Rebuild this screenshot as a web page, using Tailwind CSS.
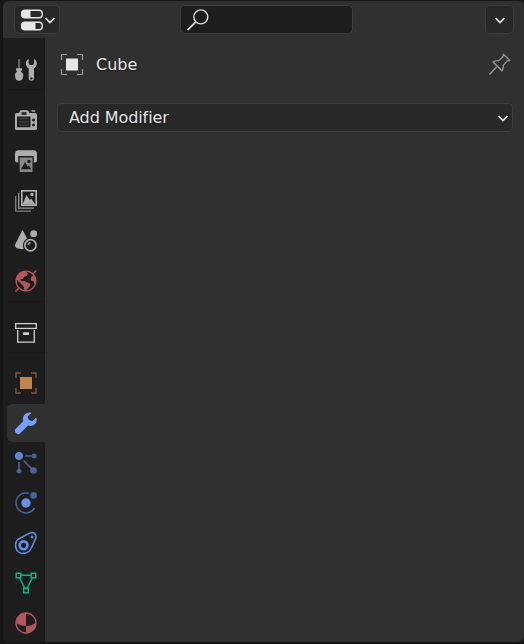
<!DOCTYPE html>
<html lang="en">
<head>
<meta charset="utf-8">
<title>Properties</title>
<script src="https://cdn.jsdelivr.net/npm/@tailwindcss/browser@4"></script>
</head>
<body class="h-screen overflow-hidden bg-[#161616] pl-[3px] pt-px pb-[2px] font-['DejaVu_Sans',sans-serif] text-base text-[#e6e6e6]">
<div class="flex h-full flex-col overflow-hidden rounded-[6px] bg-[#303030]">
  <header class="flex h-[37px] shrink-0 pl-[11px] pr-[10px] pt-1">
    <button class="flex h-[29px] w-[46px] items-center rounded-[5px] border border-[#3d3d3d] bg-[#282828] pl-[5px]">
      <svg class="h-6 w-6 shrink-0" viewBox="0 0 24 24" fill="none">
        <rect x="1.75" y="2.25" width="20.5" height="7.5" rx="3.2" stroke="#e6e6e6" stroke-width="1.4"/>
        <path d="M10.5 2H5a4 4 0 0 0 0 8h5.500z" fill="#e6e6e6"/>
        <rect x="1.75" y="14.250" width="20.5" height="7.5" rx="3.2" stroke="#e6e6e6" stroke-width="1.4"/>
        <path d="M15.500 14H5a4 4 0 0 0 0 8h10.500z" fill="#e6e6e6"/>
      </svg>
      <svg class="h-3 w-3 shrink-0" viewBox="0 0 12 12" fill="none"><path d="M1.500 4L6 8.500 10.500 4" stroke="#e6e6e6" stroke-width="1.7"/></svg>
    </button>
    <div class="ml-[120px] flex h-[29px] w-[173px] items-center rounded-[5px] border border-[#3d3d3d] bg-[#1d1d1d] pl-[5px]">
      <svg class="h-6 w-6" viewBox="0 0 24 24" fill="none" stroke="#d8d8d8" stroke-width="1.4"><circle cx="14.800" cy="8.900" r="7"/><path d="M9.800 13.900L1.500 22.200" stroke-width="1.800"/></svg>
    </div>
    <button class="ml-auto flex h-[29px] w-[29px] items-center justify-center rounded-[5px] border border-[#3d3d3d] bg-[#282828]">
      <svg class="mt-px h-3 w-3" viewBox="0 0 12 12" fill="none"><path d="M1.500 4L6 8.500 10.500 4" stroke="#e6e6e6" stroke-width="1.7"/></svg>
    </button>
  </header>
  <div class="flex min-h-0 flex-1">
    <nav class="flex w-[42px] shrink-0 flex-col bg-[#1d1d1d] pl-1 pt-3">
      <div class="flex h-10 shrink-0 items-center border-b border-[#191919] pl-[7px]">
        <svg class="h-6 w-6" viewBox="0 0 24 24" fill="#adadad">
          <path d="M4.500 1h1v9.500h-1zM2 10.200h6v1.300c0 1-1 1.300-1 2.200 1.500.7 2.300 2.200 2.300 4 0 3-1.800 5-4.300 5S1 20.700 1 17.700c0-1.800.8-3.300 2-4-.1-.9-1-1.200-1-2.200z"/>
          <path fill-rule="evenodd" d="M14.700 1v4.200c0 2.500 5.300 2.500 5.300 0V1c1.800.8 2.800 2.500 2.800 4.500 0 2.300-1.300 4-2.800 4.800v9.700a2.650 2.700 0 0 1-5.300 0v-9.700c-1.500-.8-2.800-2.500-2.800-4.800 0-2 1-3.700 2.800-4.500zM17.300 19.200a1.200 1.200 0 1 0 .1 0z"/>
        </svg>
      </div>
      <div class="mt-2.5 flex h-[202px] shrink-0 flex-col border-b border-[#191919] pl-[7px]">
        <div class="flex h-10 items-center">
          <svg class="h-6 w-6" viewBox="0 0 24 24" fill="#adadad">
            <path d="M17.500 2.200h3.700v1.600h-3.700z"/>
            <path fill-rule="evenodd" d="M2.500 5H5l1-2q.4-.8 1.200-.8h6q.8 0 1.200.8l1 2h6q1.600 0 1.600 1.600V20.500q0 1.500-1.600 1.500H2.500Q1 22 1 20.500V6.600Q1 5 2.500 5zM7.500 4.200v2.500h5V4.200zM3 8.500v10.800h13.500V8.500zM19.500 10.500a1.500 1.500 0 1 0 .1 0zM19.500 15.500a1.500 1.500 0 1 0 .1 0z"/>
            <path d="M5 10.200h9.500v1H5zM5 13.400h9.500v1H5zM5 16.600h9.500v1H5z" fill="#505050"/>
          </svg>
        </div>
        <div class="mt-px flex h-10 items-center">
          <svg class="h-6 w-6" viewBox="0 0 24 24">
            <path d="M4.500 1.200h15Q23 1.200 23 4.700V11q0 2.500-2.500 2.500h-.7V7H4.200v6.500h-.7Q1 13.500 1 11V4.700q0-3.500 3.500-3.500z" fill="#adadad"/>
            <path d="M5.700 8.500h12.800V23H5.700z" fill="#888888"/>
            <path d="M7 20.300l4-7.300 2.600 4.500 1.200-1.300 2.400 4.100z" fill="#1d1d1d"/><circle cx="15" cy="12.500" r="1.700" fill="#1d1d1d"/>
          </svg>
        </div>
        <div class="flex h-10 items-center">
          <svg class="h-6 w-6" viewBox="0 0 24 24" fill="none">
            <path d="M1.700 7v15.200H17" stroke="#808080" stroke-width="1.3"/><path d="M4.700 4v15.200H20" stroke="#999999" stroke-width="1.3"/>
            <rect x="7.800" y="1.800" width="14.400" height="14.400" stroke="#bdbdbd" stroke-width="1.500"/>
            <path d="M8.500 15.500l4-9.500 3.300 5 1.500-1.200 4 5.700z" fill="#adadad"/><circle cx="18" cy="5.500" r="1.800" fill="#adadad"/>
          </svg>
        </div>
        <div class="flex h-10 items-center">
          <svg class="h-6 w-6" viewBox="0 0 24 24" fill="#adadad">
            <path d="M8.500.8L13 9.600C10.300 11 9 13.400 9 16.300c0 1.300.3 2.500.8 3.600C6 20.500 1 19.500 1 16.500c0-.7.200-1.200.5-1.800z"/>
            <circle cx="19.700" cy="4.700" r="3.400"/>
            <circle cx="16.500" cy="16.300" r="5.600" fill="none" stroke="#adadad" stroke-width="1.700"/>
            <path d="M13.500 16a3.200 3.200 0 0 1 3-3v1.500q-1.500.2-1.700 1.500z"/>
          </svg>
        </div>
        <div class="flex h-10 items-center">
          <svg class="h-6 w-6" viewBox="0 0 24 24" fill="#b1575d">
            <circle cx="12" cy="12" r="9.900" fill="none" stroke="#b1575d" stroke-width="1.400"/>
            <path d="M19 5l3.300-3.500M5 19l-3.500 3.500" stroke="#b1575d" stroke-width="1.500"/>
            <path d="M3.200 7C5 3.800 8.500 2.200 12 2.200l1.800 2.300-.8 2.300-2.700.7-1 2.300-2.500.5-.3 1.200 2 .7 1-.5 3.500 1.500 3.200 1.500-.5 2.500-2.700 3-1 2.300-1.700-.5-.3-4-2.500-2.700-2.500-2.300L2.500 10zM16.500 9.500l1.500-2.500 2.500.2 1.300 3.300-.3 4-1 .8-1-3-2.200-.5z"/>
          </svg>
        </div>
      </div>
      <div class="mt-[11px] flex h-[40px] shrink-0 items-center border-b border-[#191919] pl-[7px]">
        <svg class="h-6 w-6" viewBox="0 0 24 24" fill="none" stroke="#d2d2d2" stroke-width="1.300">
          <rect x="1.700" y="2.600" width="20.600" height="4.800"/><path d="M3.700 9v12.200h16.600V9"/><rect x="9" y="11.300" width="6" height="2.800" rx=".8" fill="#d2d2d2" stroke="none"/>
        </svg>
      </div>
      <div class="mt-2.5 flex h-10 shrink-0 items-center pl-[7px]">
        <svg class="h-6 w-6" viewBox="0 0 24 24" fill="none">
          <path d="M7 2H2v5M17 2h5v5M22 17v5h-5M2 17v5h5" stroke="#7f5739" stroke-width="1.500"/><rect x="6" y="6" width="12" height="12" fill="#c38350"/>
        </svg>
      </div>
      <div class="my-px flex h-[38px] shrink-0 items-center rounded-l-[5px] bg-[#303030] pl-[7px]">
        <svg class="h-6 w-6" viewBox="0 0 24 24" fill="#74a2ff">
          <path d="M17.500 1.800l-3.700 3.600c-.5 2.500 1.800 5 4.600 4.500l3.700-3.500c1 2.400.6 5-1.300 6.900-1.900 1.800-4.500 2.100-6.800 1.300L6.500 22a3.100 3.100 0 0 1-4.600-4.400l7.400-7.300C8.500 8 8.900 5.300 10.700 3.400c1.900-1.900 4.500-2.500 6.800-1.600z"/>
        </svg>
      </div>
      <div class="flex shrink-0 flex-col pl-[7px]">
        <div class="flex h-10 items-center">
          <svg class="h-6 w-6" viewBox="0 0 24 24" fill="#47649f">
            <path d="M11 5h9M5 11v9M9.500 9.500l9 9" stroke="#47649f" stroke-width="1.600"/><circle cx="5" cy="5" r="4" fill="#5f88d6"/><circle cx="20.200" cy="5" r="2.400"/><circle cx="5" cy="20.200" r="2.400"/><circle cx="19.500" cy="19.500" r="3.300"/>
          </svg>
        </div>
        <div class="flex h-10 items-center">
          <svg class="h-6 w-6" viewBox="0 0 24 24" fill="none">
            <path d="M14.800 2.300A10 10 0 1 0 20.600 17" stroke="#47649f" stroke-width="1.500"/><circle cx="12" cy="12" r="4.700" fill="#6590e4"/><circle cx="19.600" cy="4.400" r="3.300" fill="#47649f"/>
          </svg>
        </div>
        <div class="flex h-10 items-center">
          <svg class="h-6 w-6" viewBox="0 0 24 24" fill="none" stroke="#6590e4">
            <path d="M3.800 8.500L15.600 2.200C19.500.2 23.200 3.500 21.700 7.400L17 17.700C15 22 9 24 4.700 21 .6 18 .7 11.300 3.800 8.500z" stroke-width="1.500"/><circle cx="9.600" cy="14.300" r="3.900" stroke-width="2.600"/><circle cx="18" cy="6" r="1.400" fill="#6590e4" stroke="none"/>
          </svg>
        </div>
        <div class="flex h-10 items-center">
          <svg class="h-6 w-6" viewBox="0 0 24 24" fill="none" stroke="#00b884" stroke-width="1.500">
            <path d="M7 4.200h10M5.700 7l5 10M18.300 7l-5 10"/><path d="M2.200 2.200h4.600v4.600H2.200zM17.200 2.200h4.600v4.600h-4.600zM9.700 17.200h4.600v4.600H9.700z"/>
          </svg>
        </div>
        <div class="flex h-10 items-center">
          <svg class="h-6 w-6" viewBox="0 0 24 24" fill="#b1575d">
            <circle cx="12" cy="12" r="10" fill="none" stroke="#b1575d" stroke-width="1.400"/><path d="M12 2v13Q6 15 2 11.500A10 10 0 0 1 12 2zM12 15q6 0 10-3.500A10 10 0 0 1 12 22z"/>
          </svg>
        </div>
      </div>
    </nav>
    <main class="min-w-0 flex-1 pl-3 pr-[11px] pt-[15px]">
      <div class="flex h-6 items-center pl-[3px] pr-px">
        <svg class="h-6 w-6" viewBox="0 0 24 24" fill="none"><path d="M7 1.500H1.500V7M17 1.500h5.500V7M22.500 16v5.500H17M1.500 16v5.500H7" stroke="#989898" stroke-width="1.200"/><rect x="6" y="5.500" width="12" height="12" fill="#e6e6e6"/></svg>
        <span class="ml-3 leading-6 [text-shadow:0_1px_2px_#0008]">Cube</span>
        <svg class="ml-auto h-6 w-6" viewBox="0 0 24 24" fill="none" stroke="#989898" stroke-width="1.300" stroke-linejoin="round"><path d="M15.500 1.200l6.300 6.300-2.500.4-4 4.500c.2 2 .1 3.500-1.300 5.400L5 9C6.900 7.500 8.500 7.400 10.500 7.700l4.500-4zM8.500 14L1.500 21.500" /></svg>
      </div>
      <button class="mt-[26px] flex h-[29px] w-full items-center justify-between rounded-[5px] border border-[#3d3d3d] bg-[#282828] pl-[11px] pr-[3px]">
        <span class="leading-6 tracking-[-0.08px] [text-shadow:0_1px_2px_#0008]">Add Modifier</span>
        <svg class="mt-px h-3 w-3" viewBox="0 0 12 12" fill="none"><path d="M1.500 4L6 8.500 10.500 4" stroke="#e6e6e6" stroke-width="1.7"/></svg>
      </button>
    </main>
  </div>
</div>
</body>
</html>
